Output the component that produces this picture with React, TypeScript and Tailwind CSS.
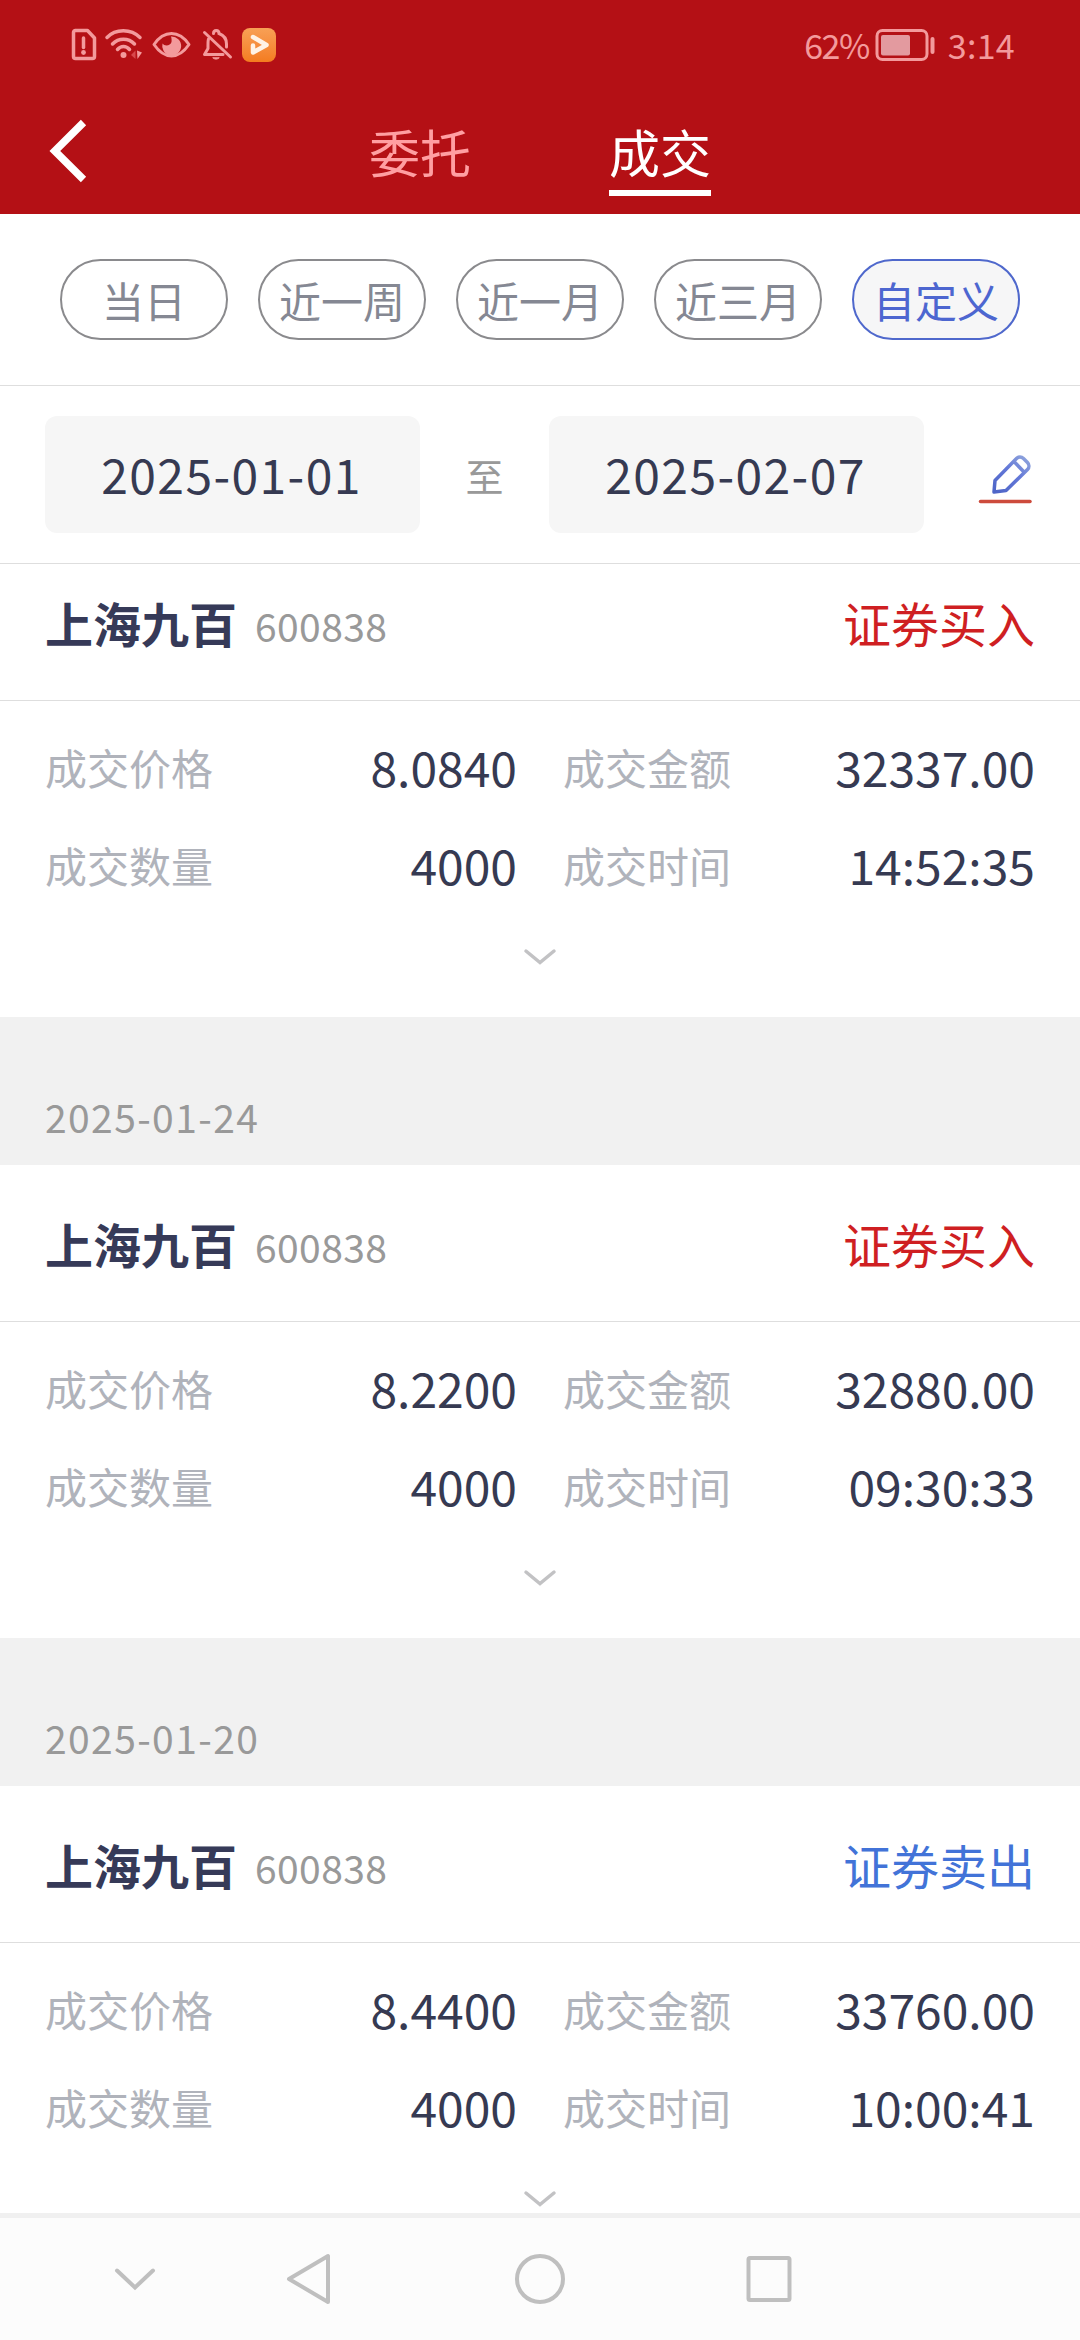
import { useState } from "react";
import clsx from "clsx";

type Deal = {
  date: string;
  name: string;
  code: string;
  side: "buy" | "sell";
  price: string;
  amount: string;
  quantity: string;
  time: string;
};

const tabs = ["委托", "成交"];

const ranges = ["当日", "近一周", "近一月", "近三月", "自定义"];

const deals: Deal[] = [
  {
    date: "",
    name: "上海九百",
    code: "600838",
    side: "buy",
    price: "8.0840",
    amount: "32337.00",
    quantity: "4000",
    time: "14:52:35",
  },
  {
    date: "2025-01-24",
    name: "上海九百",
    code: "600838",
    side: "buy",
    price: "8.2200",
    amount: "32880.00",
    quantity: "4000",
    time: "09:30:33",
  },
  {
    date: "2025-01-20",
    name: "上海九百",
    code: "600838",
    side: "sell",
    price: "8.4400",
    amount: "33760.00",
    quantity: "4000",
    time: "10:00:41",
  },
];

function StatusBar() {
  return (
    <div className="h-[90px] pl-[70px] pr-[65px] flex items-center justify-between text-[#f39a9c]">
      <div className="flex items-center">
        <svg width="28" height="36" viewBox="0 0 28 36" fill="none" stroke="currentColor" strokeWidth="3.5">
          <path d="M5 3.5H17.5L24.5 11V29.5a2 2 0 0 1-2 2H5.5a2 2 0 0 1-2-2V5.5a2 2 0 0 1 2-2Z" strokeLinejoin="round" />
          <path d="M13.5 11V20.5" strokeLinecap="round" />
          <circle cx="13.5" cy="25.5" r="2.4" fill="currentColor" stroke="none" />
        </svg>
        <svg className="ml-[6px]" width="40" height="36" viewBox="0 0 40 36" fill="none" stroke="currentColor" strokeWidth="3.5" strokeLinecap="round">
          <path d="M3 10.5C11.5 1.5 27 1.5 36 10.5" />
          <path d="M8.5 17C14.5 10.5 24.5 10.5 30.500 17" />
          <path d="M13.5 22.5C17 18.5 22 18.5 25.5 22.5" />
          <circle cx="19.5" cy="28" r="3" fill="currentColor" stroke="none" />
          <path d="M31.5 23.5L27 28L31.5 32Z" fill="#d8484c" stroke="none" />
          <path d="M33 23.500L38 25.5L33.5 32Z" fill="currentColor" stroke="none" />
        </svg>
        <svg className="ml-[7px]" width="40" height="36" viewBox="0 0 40 36" fill="none" stroke="currentColor" strokeWidth="3">
          <path d="M3 17.5C9.5 8 15 6.5 20.5 6.5S31.5 8 38 17.5C31.5 27 26 29 20.5 29S9.5 27 3 17.5Z" strokeLinejoin="round" />
          <path d="M20 9.5A9.5 9.5 0 1 1 11.5 16.5C13.5 19.5 19.5 19 20.5 15C20.8 13 20.5 11 20 9.5Z" fill="currentColor" stroke="none" />
        </svg>
        <svg className="ml-[10px]" width="32" height="36" viewBox="0 0 32 36" fill="none" stroke="currentColor" strokeWidth="3" strokeLinecap="round">
          <path d="M3.5 5.5L29.5 30" />
          <path d="M12.5 6.5C12.5 2.5 18 2.5 18 6.5C23.5 8.5 25.5 12 25.5 17V20" />
          <path d="M7.5 12C6.8 14 7 17 7 21.5L3.5 27.5H22" strokeLinejoin="round" />
          <path d="M12 31C13.5 32.5 16.5 32.5 18 31Z" fill="currentColor" strokeWidth="1" />
        </svg>
        <div className="ml-[9px] size-[34px] rounded-[8px] bg-linear-to-b from-[#f8a055] to-[#f47c1e] flex items-center justify-center">
          <svg width="34" height="34" viewBox="0 0 34 34" fill="none">
            <path d="M11 9L24.5 17L11 24.5V17.5" stroke="#fff3e6" strokeWidth="4.5" strokeLinejoin="round" strokeLinecap="round" />
          </svg>
        </div>
      </div>

      <div className="flex items-center">
        <span className="text-[34px] leading-[48px] tracking-[-1.5px]">62%</span>
        <svg className="ml-[6px]" width="62" height="36" viewBox="0 0 62 36">
          <rect x="2" y="3.5" width="50" height="29" rx="5.5" fill="none" stroke="currentColor" strokeWidth="3" />
          <rect x="6" y="8" width="29" height="20.5" rx="2" fill="#e39a9f" />
          <rect x="55.5" y="10" width="4" height="17" rx="2" fill="currentColor" />
        </svg>
        <span className="ml-[11px] text-[34px] leading-[48px] tracking-[0.3px]">3:14</span>
      </div>
    </div>
  );
}

function Header() {
  const [tab, setTab] = useState("成交");

  return (
    <div className="h-[124px] pl-[45px] pr-[91px] flex items-start">
      <button className="mt-[26px] w-[46px] h-[70px]">
        <svg width="46" height="70" viewBox="0 0 46 70" fill="none">
          <path d="M38.5 6.5L9.8 35L38.5 63.5" stroke="#fff" strokeWidth="7.5" />
        </svg>
      </button>
      <div className="mt-[28px] flex-1 flex justify-center gap-[138px]">
        {tabs.map((item) => (
          <button
            key={item}
            onClick={() => setTab(item)}
            className={clsx(
              "h-[78px] border-b-6 text-[51px] leading-[66px] flex items-start",
              item === tab ? "text-white border-white" : "text-[#ff9fa2] border-transparent"
            )}
          >
            {item}
          </button>
        ))}
      </div>
    </div>
  );
}

function RangePills() {
  const [range, setRange] = useState("自定义");

  return (
    <div className="h-[172px] pt-[45px] px-[60px] flex gap-[30px] border-b border-[#dedede]">
      {ranges.map((item) => (
        <button
          key={item}
          onClick={() => setRange(item)}
          className={clsx(
            "w-[168px] h-[81px] rounded-full border-2 text-[42px] leading-[78px] whitespace-nowrap flex items-start justify-center",
            item === range
              ? "border-[#4f68cc] bg-[#f6f6f7] text-[#4d66d0]"
              : "border-[#8a8a8d] text-[#858893]"
          )}
        >
          {item}
        </button>
      ))}
    </div>
  );
}

function DateBox({ value }: { value: string }) {
  return (
    <div className="w-[375px] h-[117px] rounded-[12px] bg-[#f6f6f6] pr-[2px] flex items-center justify-center text-[48px] leading-[112px] tracking-[1.4px] text-[#363a52]">
      <span className="-mt-[4px]">{value}</span>
    </div>
  );
}

function DateRange() {
  return (
    <div className="h-[178px] pt-[30px] pl-[45px] pr-[47px] flex items-start border-b border-[#dedede]">
      <DateBox value="2025-01-01" />
      <span className="w-[129px] text-center text-[38px] leading-[118px] text-[#999]">至</span>
      <DateBox value="2025-02-07" />
      <svg className="ml-auto mt-[34px]" width="56" height="56" viewBox="0 0 56 56" fill="none">
        <defs>
          <linearGradient id="pen" x1="48" y1="6" x2="20" y2="42" gradientUnits="userSpaceOnUse">
            <stop stopColor="#8ea3dc" />
            <stop offset="0.45" stopColor="#6378d8" />
            <stop offset="1" stopColor="#4f66c8" />
          </linearGradient>
        </defs>
        <path
          d="M18 30.5L39.5 8.5a5 5 0 0 1 7 0l4 4a5 5 0 0 1 0 7L29 40.5L17 42Z M37 11.5L47.5 22.5"
          stroke="url(#pen)"
          strokeWidth="3.5"
          strokeLinejoin="round"
        />
        <path d="M3.5 51.5H53" stroke="#cd4b3c" strokeWidth="3.5" strokeLinecap="round" />
      </svg>
    </div>
  );
}

function Field({ label, value }: { label: string; value: string }) {
  return (
    <div className="h-[98px] flex items-center justify-between">
      <span className="text-[42px] text-[#b0b3bb]">{label}</span>
      <span className="text-[48px] text-[#363a52]">{value}</span>
    </div>
  );
}

function DealCard({ deal }: { deal: Deal }) {
  return (
    <div>
      {deal.date && (
        <div className="h-[148px] px-[45px] pt-[54px] bg-[#f1f1f1] text-[39px] leading-[90px] tracking-[1.4px] text-[#999]">
          {deal.date}
        </div>
      )}
      <div className="h-[473px] bg-white">
        <div className="h-[157px] px-[45px] flex items-center border-b border-[#dedede]">
          <span className="text-[48px] font-bold text-[#363a58]">{deal.name}</span>
          <span className="ml-[18px] mt-[6px] text-[39px] tracking-[0.4px] text-[#999]">{deal.code}</span>
          <span className={clsx("ml-auto text-[48px]", deal.side === "buy" ? "text-[#cf1f22]" : "text-[#4273d8]")}>
            {deal.side === "buy" ? "证券买入" : "证券卖出"}
          </span>
        </div>
        <div className="pt-[16px] px-[45px] grid grid-cols-[472px_472px] gap-x-[46px]">
          <Field label="成交价格" value={deal.price} />
          <Field label="成交金额" value={deal.amount} />
          <Field label="成交数量" value={deal.quantity} />
          <Field label="成交时间" value={deal.time} />
        </div>
        <div className="pt-[34px] flex justify-center">
          <svg width="34" height="20" viewBox="0 0 34 20" fill="none">
            <path d="M3 4L17 15.5L31 4" stroke="#c2c2c4" strokeWidth="3.5" strokeLinecap="round" />
          </svg>
        </div>
      </div>
    </div>
  );
}

function NavBar() {
  return (
    <div className="h-[127px] shrink-0 border-t-5 border-[#f0f0f0] bg-[#fcfcfc] pt-[34px] pl-[110px] flex items-start">
      <svg width="50" height="54" viewBox="0 0 50 54" fill="none">
        <path d="M7 18.5L25 35.5L43 18.5" stroke="#bfbfbf" strokeWidth="4" strokeLinecap="round" />
      </svg>
      <svg className="ml-[123px]" width="52" height="54" viewBox="0 0 52 54" fill="none">
        <path d="M45 4V50L6 27Z" stroke="#bfbfbf" strokeWidth="4" strokeLinejoin="round" />
      </svg>
      <svg className="ml-[178px]" width="54" height="54" viewBox="0 0 54 54" fill="none">
        <circle cx="27" cy="27" r="23" stroke="#bfbfbf" strokeWidth="4" />
      </svg>
      <svg className="ml-[175px]" width="54" height="54" viewBox="0 0 54 54" fill="none">
        <rect x="6.5" y="6" width="41" height="42" rx="1.5" stroke="#bfbfbf" strokeWidth="4" />
      </svg>
    </div>
  );
}

export default function App() {
  return (
    <div className="w-[1080px] h-[2340px] flex flex-col overflow-hidden bg-white font-['Noto_Sans_CJK_SC',sans-serif]">
      <div className="bg-[#b41015]">
        <StatusBar />
        <Header />
      </div>
      <RangePills />
      <DateRange />
      {/* list is scrolled a little under the date bar */}
      <div className="flex-1 min-h-0 overflow-hidden">
        <div className="-mt-[20px]">
          {deals.map((deal) => (
            <DealCard key={deal.time} deal={deal} />
          ))}
        </div>
      </div>
      <NavBar />
    </div>
  );
}
